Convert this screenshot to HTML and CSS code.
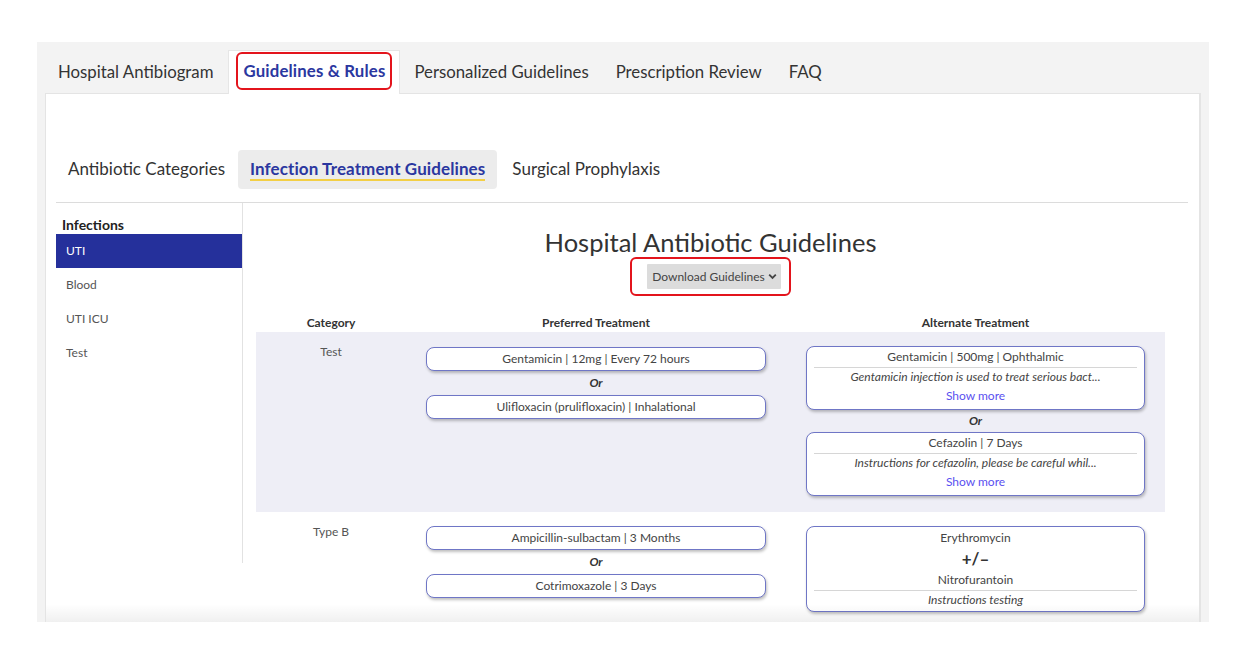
FILE: index.html
```html
<!DOCTYPE html>
<html>
<head>
<meta charset="utf-8">
<link rel="stylesheet" href="styles.css">
</head>
<body>
<div class="app">
  <nav class="tabs">
    <a class="tab">Hospital Antibiogram</a>
    <a class="tab active"><span class="hl">Guidelines &amp; Rules</span></a>
    <a class="tab">Personalized Guidelines</a>
    <a class="tab">Prescription Review</a>
    <a class="tab">FAQ</a>
  </nav>
  <section class="panel">
    <nav class="subtabs">
      <a class="subtab">Antibiotic Categories</a>
      <a class="subtab active"><span class="ul">Infection Treatment Guidelines</span></a>
      <a class="subtab">Surgical Prophylaxis</a>
    </nav>
    <div class="divider"></div>
    <div class="body">
      <aside class="sidebar">
        <h4 class="side-title">Infections</h4>
        <div class="side-item active">UTI</div>
        <div class="side-item">Blood</div>
        <div class="side-item">UTI ICU</div>
        <div class="side-item">Test</div>
      </aside>
      <main class="main">
        <h2 class="title">Hospital Antibiotic Guidelines</h2>
        <div class="dl-wrap">
          <span class="dl-hl"><button class="dl-btn">Download Guidelines <svg width="9" height="7" viewBox="0 0 9 7"><path d="M1.2 1.6 L4.5 4.9 L7.8 1.6" fill="none" stroke="#444" stroke-width="1.8"/></svg></button></span>
        </div>
        <div class="table">
          <div class="row head">
            <div class="cell cat">Category</div>
            <div class="cell">Preferred Treatment</div>
            <div class="cell">Alternate Treatment</div>
          </div>
          <div class="row shaded">
            <div class="cell cat">Test</div>
            <div class="cell">
              <div class="pill">Gentamicin | 12mg | Every 72 hours</div>
              <div class="or">Or</div>
              <div class="pill">Ulifloxacin (prulifloxacin) | Inhalational</div>
            </div>
            <div class="cell alt">
              <div class="card">
                <div class="card-line">Gentamicin | 500mg | Ophthalmic</div>
                <div class="card-hr"></div>
                <div class="card-desc">Gentamicin injection is used to treat serious bact...</div>
                <a class="more">Show more</a>
              </div>
              <div class="or short">Or</div>
              <div class="card">
                <div class="card-line">Cefazolin | 7 Days</div>
                <div class="card-hr"></div>
                <div class="card-desc">Instructions for cefazolin, please be careful whil...</div>
                <a class="more">Show more</a>
              </div>
            </div>
          </div>
          <div class="row">
            <div class="cell cat">Type B</div>
            <div class="cell">
              <div class="pill">Ampicillin-sulbactam | 3 Months</div>
              <div class="or">Or</div>
              <div class="pill">Cotrimoxazole | 3 Days</div>
            </div>
            <div class="cell">
              <div class="card combo">
                <div class="card-line">Erythromycin</div>
                <div class="pm">+/–</div>
                <div class="card-line">Nitrofurantoin</div>
                <div class="card-hr"></div>
                <div class="card-desc">Instructions testing</div>
              </div>
            </div>
          </div>
        </div>
      </main>
    </div>
    <div class="fade"></div>
  </section>
</div>
</body>
</html>
```

FILE: styles.css
```css
* { box-sizing: border-box; }
html, body { margin: 0; padding: 0; background: #fff; }
body {
  font-family: Lato, "Open Sans", sans-serif;
  color: #333;
}
.app {
  margin: 42px 0 0 37px;
  width: 1172px;
  height: 580px;
  background: #f3f3f3;
  padding: 8px 8px 0 8px;
  display: flex;
  flex-direction: column;
  overflow: hidden;
}
.tabs {
  display: flex;
  height: 43px;
  flex: none;
}
.tab {
  display: flex;
  align-items: center;
  padding: 0 13px;
  font-size: 16.8px;
  color: #333;
  white-space: nowrap;
  margin-right: 1px;
}
.tab:first-child { padding-right: 14px; }
.tab.active {
  background: #fff;
  border: 1px solid #e6e6e6;
  border-bottom: none;
  color: #2b37a0;
  font-weight: 700;
  letter-spacing: 0.15px;
  position: relative;
  z-index: 1;
  margin-bottom: -1px;
  padding: 0 14px;
}
.hl {
  display: inline-block;
  margin: -3px -7px 0;
  padding: 0 5px;
  border: 2px solid #e3141c;
  border-radius: 6px;
  line-height: 34px;
}
.panel {
  flex: 1;
  background: #fff;
  border: 1px solid #e4e4e4;
  border-right-width: 2px;
  border-bottom: none;
  padding: 0 11px 0 10px;
  position: relative;
  overflow: hidden;
}
.subtabs {
  display: flex;
  margin-top: 56px;
  height: 39px;
}
.subtab {
  padding: 0 12px;
  font-size: 17px;
  line-height: 37px;
  color: #333;
  white-space: nowrap;
}
.subtab.active {
  background: #ececec;
  border-radius: 4px;
  color: #2b37a0;
  font-weight: 700;
  letter-spacing: 0.1px;
  margin-left: 1px;
  margin-right: 3px;
}
.ul {
  border-bottom: 2px solid #f3cf45;
  padding-bottom: 0;
}
.divider {
  margin-top: 13px;
  height: 1px;
  background: #dcdcdc;
}
.body {
  display: flex;
}
.sidebar {
  width: 187px;
  flex: none;
  border-right: 1px solid #e2e2e2;
  height: 360px;
}
.side-title {
  margin: 0;
  padding: 12px 0 0 6px;
  font-size: 14px;
  line-height: 19px;
  font-weight: 700;
  color: #222;
}
.side-item {
  height: 34px;
  line-height: 34px;
  padding-left: 10px;
  font-size: 12px;
  color: #555;
}
.side-item.active {
  background: #25309b;
  color: #fff;
}
.main {
  flex: 1;
  padding: 0 24px 0 13px;
  display: flex;
  flex-direction: column;
  align-items: stretch;
}
.title {
  margin: 0;
  padding-top: 24px;
  text-align: center;
  font-size: 25.5px;
  line-height: 31px;
  font-weight: 400;
  color: #333;
}
.dl-wrap {
  display: flex;
  justify-content: center;
  margin-top: -1px;
}
.dl-hl {
  display: inline-block;
  border: 2px solid #e3141c;
  border-radius: 6px;
  padding: 5px 8px 5px 15px;
  margin-left: 0;
}
.dl-btn {
  font-family: inherit;
  background: #dcdcdc;
  border: none;
  border-radius: 1px;
  height: 25px;
  padding: 0 4px 0 5px;
  font-size: 12px;
  color: #444;
  display: flex;
  align-items: center;
  gap: 3px;
}
.table {
  margin-top: 18px;
}
.row {
  display: grid;
  grid-template-columns: 150px 380px 379px;
}
.row.head .cell {
  font-weight: 700;
  font-size: 12px;
  line-height: 18px;
  text-align: center;
  color: #333;
  padding: 0;
}
.row.shaded { background: #eeeef6; }
.cell {
  padding: 15px 20px 16px;
  text-align: center;
  font-size: 12px;
  color: #444;
}
.cell.alt { padding-top: 14px; padding-bottom: 16px; }
.row:last-child .cell { padding-top: 14px; }
.cell.cat {
  padding: 12px 0 0;
  color: #555;
}
.row:last-child .cell.cat { padding-top: 12px; }
.pill {
  height: 24px;
  line-height: 21px;
  border: 1.5px solid #6f76c6;
  border-radius: 8px;
  background: #fff;
  box-shadow: 1px 2px 3px rgba(0,0,0,0.25);
  font-size: 12px;
  color: #444;
}
.or {
  height: 24px;
  line-height: 23px;
  font-weight: 700;
  font-style: italic;
  font-size: 12px;
  color: #333;
}
.or.short { height: 22px; line-height: 22px; }
.card {
  border: 1.5px solid #6f76c6;
  border-radius: 8px;
  background: #fff;
  box-shadow: 1px 2px 3px rgba(0,0,0,0.25);
  padding: 1px 7px 3px;
  font-size: 12px;
  color: #444;
}
.card-line { line-height: 18px; }
.card-hr {
  height: 1px;
  background: #d6d6d6;
  margin: 1px 0 0;
}
.card-desc {
  font-style: italic;
  line-height: 17px;
  color: #444;
}
.more {
  display: block;
  color: #5a50f0;
  line-height: 20px;
  margin-top: 1px;
}
.combo { padding-top: 2px; padding-bottom: 3px; }
.pm {
  font-weight: 700;
  font-size: 17px;
  line-height: 24px;
  color: #333;
}
.fade {
  position: absolute;
  left: 0;
  right: 0;
  bottom: 0;
  height: 18px;
  background: linear-gradient(to bottom, rgba(0,0,0,0), rgba(0,0,0,0.06));
  pointer-events: none;
}
```
